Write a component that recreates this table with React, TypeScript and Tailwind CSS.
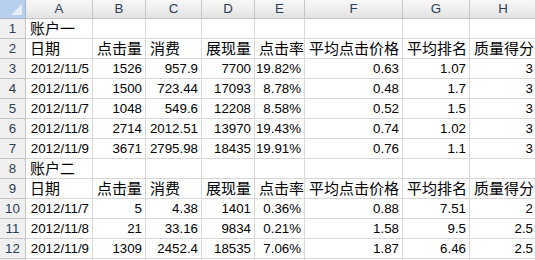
const cols = ["A", "B", "C", "D", "E", "F", "G", "H"];

const head = ["日期", "点击量", "消费", "展现量", "点击率", "平均点击价格", "平均排名", "质量得分"];

type Row = { n: number; title?: string; head?: boolean; vals?: string[] };

const rows: Row[] = [
  { n: 1, title: "账户一" },
  { n: 2, head: true },
  { n: 3, vals: ["2012/11/5", "1526", "957.9", "7700", "19.82%", "0.63", "1.07", "3"] },
  { n: 4, vals: ["2012/11/6", "1500", "723.44", "17093", "8.78%", "0.48", "1.7", "3"] },
  { n: 5, vals: ["2012/11/7", "1048", "549.6", "12208", "8.58%", "0.52", "1.5", "3"] },
  { n: 6, vals: ["2012/11/8", "2714", "2012.51", "13970", "19.43%", "0.74", "1.02", "3"] },
  { n: 7, vals: ["2012/11/9", "3671", "2795.98", "18435", "19.91%", "0.76", "1.1", "3"] },
  { n: 8, title: "账户二" },
  { n: 9, head: true },
  { n: 10, vals: ["2012/11/7", "5", "4.38", "1401", "0.36%", "0.88", "7.51", "2"] },
  { n: 11, vals: ["2012/11/8", "21", "33.16", "9834", "0.21%", "1.58", "9.5", "2.5"] },
  { n: 12, vals: ["2012/11/9", "1309", "2452.4", "18535", "7.06%", "1.87", "6.46", "2.5"] },
  { n: 13 },
];

const num = "font-['Liberation_Sans',Arial,sans-serif] text-[13.3px] text-black";
const cjk = "font-['Noto_Sans_CJK_SC','Noto_Sans',sans-serif] text-[15px] text-black";

export default function App() {
  return (
    <div className="w-[535px] h-[260px] overflow-hidden bg-white">
      <div className="grid grid-cols-[26px_67px_53px_56px_53px_50px_98px_67px_67px]">
        {/* corner */}
        <div className="h-[19px] border-r border-b border-[#9eb6ce] bg-[#b8d0ee] relative">
          <div className="absolute right-[3px] bottom-[3px] w-0 h-0 border-l-[11px] border-l-transparent border-b-[11px] border-b-[#e6eef9]" />
        </div>
        {cols.map((c) => (
          <div
            key={c}
            className={`h-[19px] flex items-center justify-center border-r border-b border-[#c5c5c5] bg-gradient-to-b from-[#f7f7f7] via-[#eeeeee] to-[#e2e2e2] ${num}`}
          >
            <span className="text-[#2b3e55]">{c}</span>
          </div>
        ))}

        {rows.map((r) => (
          <div key={r.n} className="contents">
            <div className={`h-[20px] flex items-center justify-center border-r border-b border-[#c5c5c5] bg-[#f0f0f0] ${num}`}>
              {r.n < 13 && <span className="text-[#2b3e55]">{r.n}</span>}
            </div>
            {cols.map((c, i) => {
              let content: React.ReactNode = null;
              let align = "justify-end pr-[3px]";
              let font = num;
              if (r.title && i === 0) {
                content = r.title;
                align = "justify-start pl-[4px]";
                font = cjk;
              } else if (r.head) {
                content = head[i];
                align = "justify-start pl-[4px]";
                font = cjk;
              } else if (r.vals) {
                content = r.vals[i];
              }
              return (
                <div
                  key={c}
                  className={`h-[20px] flex items-center whitespace-nowrap overflow-visible border-r border-b border-[#d8d8d8] ${align} ${font}`}
                >
                  {content}
                </div>
              );
            })}
          </div>
        ))}
      </div>
    </div>
  );
}
